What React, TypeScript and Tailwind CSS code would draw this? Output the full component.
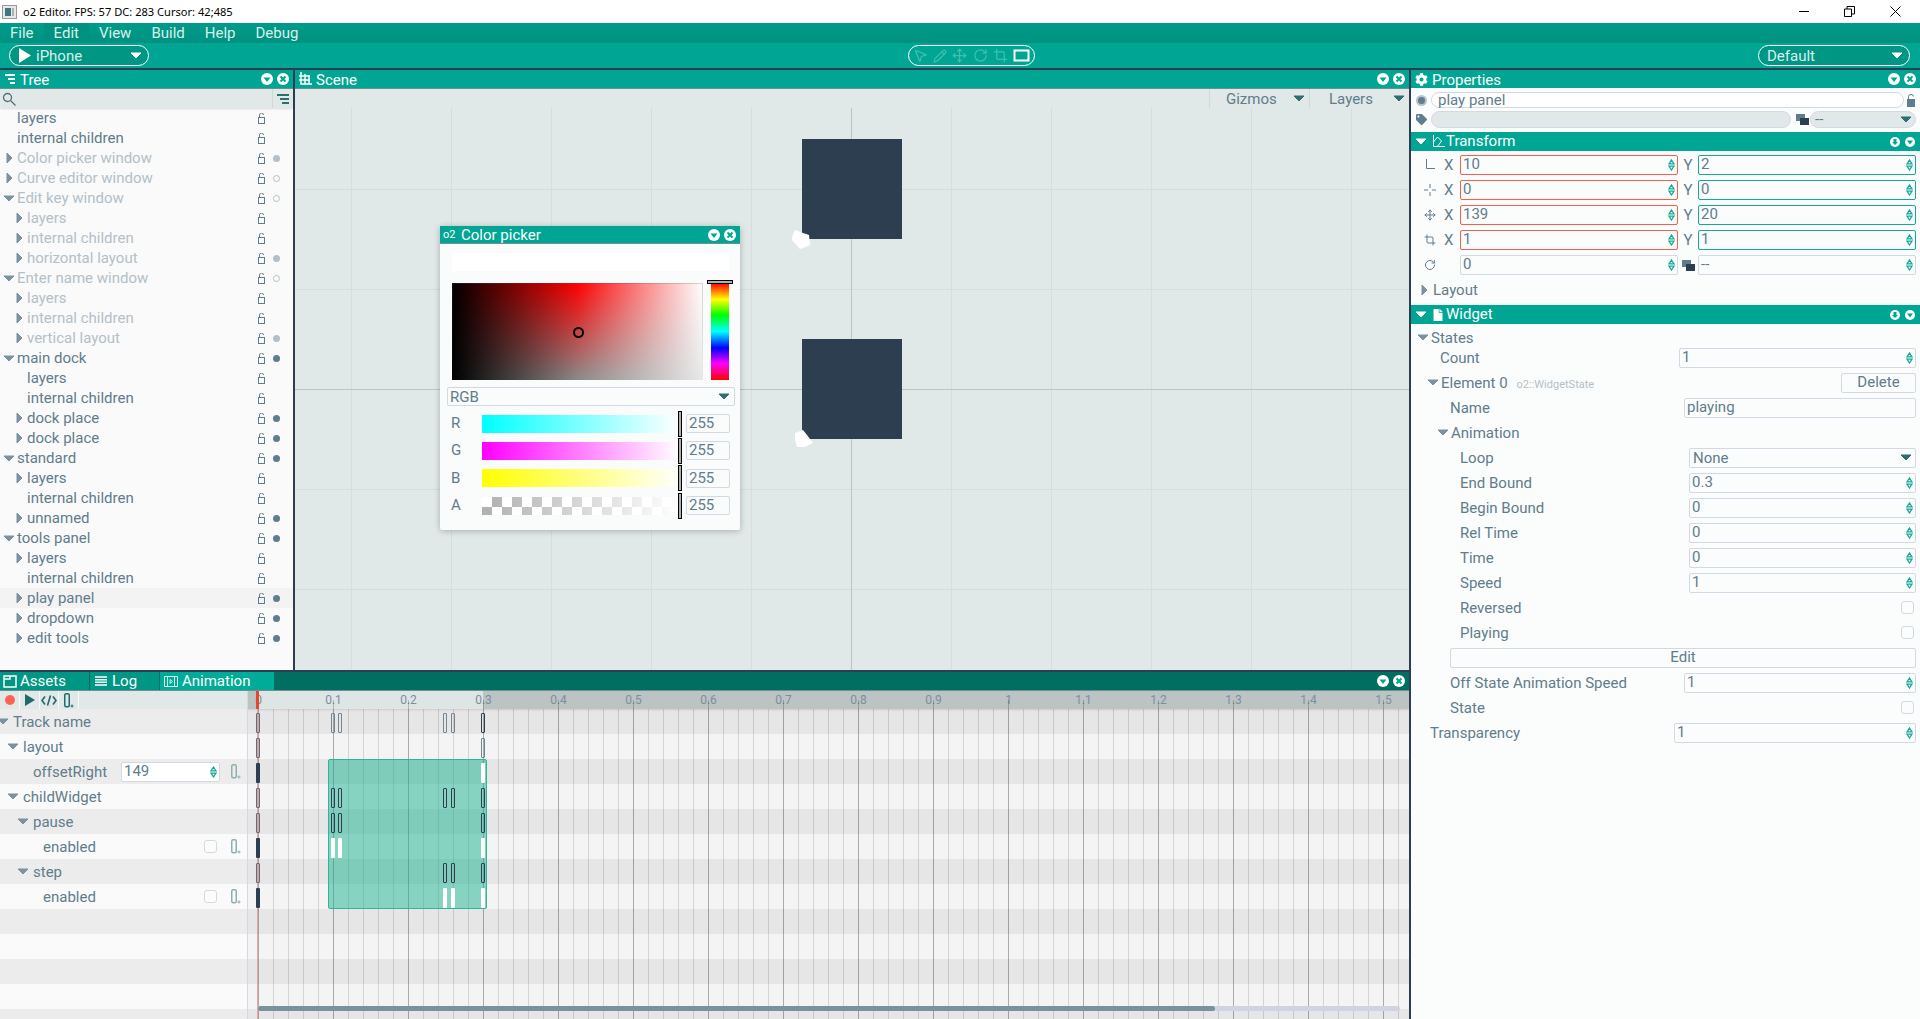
import type { ReactNode } from 'react';
import { MousePointer2, Pencil, Move, RotateCw, Crop } from 'lucide-react';
import { FaCog, FaTag, FaFile } from 'react-icons/fa';

type TreeItem = {
  name: string;
  level: 0 | 1;
  arrow?: 'right' | 'down';
  dim?: boolean;
  dot?: 'fill' | 'ring';
  active?: boolean;
};

const TREE: TreeItem[] = [
  { name: 'layers', level: 0 },
  { name: 'internal children', level: 0 },
  { name: 'Color picker window', level: 0, arrow: 'right', dim: true, dot: 'fill' },
  { name: 'Curve editor window', level: 0, arrow: 'right', dim: true, dot: 'ring' },
  { name: 'Edit key window', level: 0, arrow: 'down', dim: true, dot: 'ring' },
  { name: 'layers', level: 1, arrow: 'right', dim: true },
  { name: 'internal children', level: 1, arrow: 'right', dim: true },
  { name: 'horizontal layout', level: 1, arrow: 'right', dim: true, dot: 'fill' },
  { name: 'Enter name window', level: 0, arrow: 'down', dim: true, dot: 'ring' },
  { name: 'layers', level: 1, arrow: 'right', dim: true },
  { name: 'internal children', level: 1, arrow: 'right', dim: true },
  { name: 'vertical layout', level: 1, arrow: 'right', dim: true, dot: 'fill' },
  { name: 'main dock', level: 0, arrow: 'down', dot: 'fill' },
  { name: 'layers', level: 1 },
  { name: 'internal children', level: 1 },
  { name: 'dock place', level: 1, arrow: 'right', dot: 'fill' },
  { name: 'dock place', level: 1, arrow: 'right', dot: 'fill' },
  { name: 'standard', level: 0, arrow: 'down', dot: 'fill' },
  { name: 'layers', level: 1, arrow: 'right' },
  { name: 'internal children', level: 1 },
  { name: 'unnamed', level: 1, arrow: 'right', dot: 'fill' },
  { name: 'tools panel', level: 0, arrow: 'down', dot: 'fill' },
  { name: 'layers', level: 1, arrow: 'right' },
  { name: 'internal children', level: 1 },
  { name: 'play panel', level: 1, arrow: 'right', dot: 'fill', active: true },
  { name: 'dropdown', level: 1, arrow: 'right', dot: 'fill' },
  { name: 'edit tools', level: 1, arrow: 'right', dot: 'fill' },
];

const RULER = ['0', '0.1', '0.2', '0.3', '0.4', '0.5', '0.6', '0.7', '0.8', '0.9', '1', '1.1', '1.2', '1.3', '1.4', '1.5'];

type KeyKind = 'faint' | 'outline' | 'solid' | 'white' | 'first';

// x is measured from the left edge of the timeline, row is the track index
const KEYS: { x: number; row: number; kind: KeyKind }[] = [
  { x: 8, row: 0, kind: 'first' },
  { x: 83, row: 0, kind: 'faint' },
  { x: 90, row: 0, kind: 'faint' },
  { x: 195, row: 0, kind: 'faint' },
  { x: 203, row: 0, kind: 'faint' },
  { x: 233, row: 0, kind: 'outline' },
  { x: 8, row: 1, kind: 'first' },
  { x: 233, row: 1, kind: 'faint' },
  { x: 8, row: 2, kind: 'solid' },
  { x: 233, row: 2, kind: 'white' },
  { x: 8, row: 3, kind: 'first' },
  { x: 83, row: 3, kind: 'outline' },
  { x: 90, row: 3, kind: 'outline' },
  { x: 195, row: 3, kind: 'outline' },
  { x: 203, row: 3, kind: 'outline' },
  { x: 233, row: 3, kind: 'outline' },
  { x: 8, row: 4, kind: 'first' },
  { x: 83, row: 4, kind: 'outline' },
  { x: 90, row: 4, kind: 'outline' },
  { x: 233, row: 4, kind: 'outline' },
  { x: 8, row: 5, kind: 'solid' },
  { x: 83, row: 5, kind: 'white' },
  { x: 90, row: 5, kind: 'white' },
  { x: 233, row: 5, kind: 'white' },
  { x: 8, row: 6, kind: 'first' },
  { x: 195, row: 6, kind: 'outline' },
  { x: 203, row: 6, kind: 'outline' },
  { x: 233, row: 6, kind: 'outline' },
  { x: 8, row: 7, kind: 'solid' },
  { x: 195, row: 7, kind: 'white' },
  { x: 203, row: 7, kind: 'white' },
  { x: 233, row: 7, kind: 'white' },
];

const KEY_STYLES: Record<KeyKind, string> = {
  faint: 'border border-[#708595]',
  outline: 'border border-[#2c3e50]',
  solid: 'bg-[#2c3e50]',
  white: 'bg-white',
  first: 'border border-[#5c6f80] bg-[#d4a5a0]',
};

function CaretDown({ className = 'text-[#7d929e]' }: { className?: string }) {
  return (
    <svg width="12" height="7" viewBox="0 0 12 7" className={`shrink-0 ${className}`}>
      <path d="M1 1h10L6 6z" fill="currentColor" stroke="currentColor" strokeLinejoin="round" />
    </svg>
  );
}

function CaretRight() {
  return (
    <svg width="7" height="12" viewBox="0 0 7 12" className="shrink-0 text-[#7d929e]">
      <path d="M1 1v10l5-5z" fill="currentColor" stroke="currentColor" strokeLinejoin="round" />
    </svg>
  );
}

function Lock() {
  return (
    <svg width="8" height="11" viewBox="0 0 8 11" className="shrink-0 text-[#5f7d8c]" fill="none" stroke="currentColor">
      <rect x="0.5" y="4.5" width="6" height="6" />
      <path d="M1.500 4V2a2 2 0 0 1 4 0" />
    </svg>
  );
}

function HeaderButtons() {
  return (
    <div className="flex items-center gap-1">
      <svg width="12" height="12" viewBox="0 0 12 12" className="text-white">
        <circle cx="6" cy="6" r="6" fill="currentColor" />
        <path d="M2.500 4.500h7L6 9z" fill="#00a693" />
      </svg>
      <svg width="12" height="12" viewBox="0 0 12 12" className="text-white">
        <circle cx="6" cy="6" r="6" fill="currentColor" />
        <path d="M3.500 3.500l5 5M8.500 3.500l-5 5" stroke="#00a693" strokeWidth="2" />
      </svg>
    </div>
  );
}

function SectionButtons() {
  return (
    <div className="flex items-center gap-[5px]">
      <svg width="10" height="10" viewBox="0 0 10 10">
        <circle cx="5" cy="5" r="5" fill="#fff" />
        <path d="M3.500 2h3v3H8L5 8 2 5h1.500z" fill="#00a693" />
      </svg>
      <svg width="10" height="10" viewBox="0 0 10 10">
        <circle cx="5" cy="5" r="5" fill="#fff" />
        <path d="M2 3.500h6L5 7.500z" fill="#00a693" />
      </svg>
    </div>
  );
}

function Spin() {
  return (
    <svg width="7" height="12" viewBox="0 0 7 12" className="shrink-0 text-[#14a898]" fill="none" stroke="currentColor" strokeWidth="1.300">
      <path d="M3.500 1L6 4.800H1z" />
      <path d="M3.500 11L6 7.200H1z" />
    </svg>
  );
}

const INPUT_BORDER = {
  plain: 'border-[#d3d9e4]',
  red: 'border-[#f4604c]',
  teal: 'border-[#14a898]',
};

function NumberInput({
  value,
  tone = 'plain',
  className = '',
  spin = true,
}: {
  value: string;
  tone?: keyof typeof INPUT_BORDER;
  className?: string;
  spin?: boolean;
}) {
  return (
    <div
      className={`flex h-5 items-center justify-between rounded-[2px] border bg-[#fbfcfc] pl-[2px] pr-[2px] text-[#607d8b] ${INPUT_BORDER[tone]} ${className}`}
    >
      <span className="-mt-px">{value}</span>
      {spin && <Spin />}
    </div>
  );
}

function KeyAdd({ className = 'text-[#8fb0b0]' }: { className?: string }) {
  return (
    <svg width="10" height="15" viewBox="0 0 10 15" className={className}>
      <rect x="0.750" y="0.750" width="4.500" height="13" rx="1.500" fill="none" stroke="currentColor" strokeWidth="1.500" />
      <path d="M6.500 13h3M8 11.500v3" stroke="currentColor" />
    </svg>
  );
}

function Checkbox() {
  return <div className="h-[13px] w-[13px] rounded-[3px] border border-[#d3d9e4] bg-[#fbfcfc]" />;
}

function PropRow({ label, pad, children }: { label: ReactNode; pad: string; children?: ReactNode }) {
  return (
    <div className={`flex h-[25px] shrink-0 items-center justify-between pr-[4px] ${pad}`}>
      <span className="whitespace-nowrap pt-[2px]">{label}</span>
      {children}
    </div>
  );
}

function Expander({ label, pad, extra }: { label: string; pad: string; extra?: ReactNode }) {
  return (
    <div className={`flex items-center gap-[2px] ${pad}`}>
      <CaretDown />
      <span className="pt-[2px]">{label}</span>
      {extra}
    </div>
  );
}

function SectionHeader({ title, icon }: { title: string; icon: ReactNode }) {
  return (
    <div className="flex h-[19px] shrink-0 items-center justify-between bg-[#00a693] pl-[4px] pr-[5px] text-white">
      <div className="flex items-center">
        <CaretDown className="text-white" />
        <div className="ml-[5px] flex w-[12px] justify-center">{icon}</div>
        <span className="ml-[2px]">{title}</span>
      </div>
      <SectionButtons />
    </div>
  );
}

function TransformRow({ icon, x, y, xTone, yTone }: { icon: ReactNode; x: string; y: string; xTone: 'red' | 'plain'; yTone: 'teal' | 'plain' }) {
  const showAxis = xTone === 'red';
  return (
    <div className="flex h-[25px] shrink-0 items-center pl-[9px] pr-[3px]">
      <div className="flex w-[20px] justify-center">{icon}</div>
      <span className="w-[20px] pl-[4px] pt-[2px]">{showAxis ? 'X' : ''}</span>
      <NumberInput value={x} tone={xTone} className="w-[218px]" />
      <div className="flex w-[20px] justify-center pt-[2px]">
        {showAxis ? (
          'Y'
        ) : (
          <svg width="13" height="11" viewBox="0 0 13 11">
            <rect x="0" y="0" width="9" height="7" fill="#5f7d8c" />
            <rect x="4" y="4" width="9" height="7" fill="#2c3e50" />
          </svg>
        )}
      </div>
      <NumberInput value={y} tone={yTone} className="w-[218px]" />
    </div>
  );
}

function Track({ index, children }: { index: number; children?: ReactNode }) {
  return (
    <div className={`flex h-[25px] items-center justify-between pr-[6px] ${index % 2 === 0 ? 'bg-[#ececec]' : 'bg-[#fafafa]'}`}>
      {children}
    </div>
  );
}

function TrackLabel({ index, label, pad }: { index: number; label: string; pad: string }) {
  return (
    <Track index={index}>
      <div className={`flex items-center gap-[4px] ${pad}`}>
        <CaretDown />
        <span className="pt-px">{label}</span>
      </div>
    </Track>
  );
}

function TrackValue({ index, label, pad, children }: { index: number; label: string; pad: string; children: ReactNode }) {
  return (
    <Track index={index}>
      <span className={`pt-px ${pad}`}>{label}</span>
      {children}
    </Track>
  );
}

function ColorPicker() {
  return (
    <div className="absolute left-[145px] top-[118px] h-[304px] w-[300px] rounded-[2px] bg-[#fafbfb] shadow-[0_1px_6px_rgba(0,0,0,0.25)]">
      <div className="flex h-[18px] items-center justify-between border-b border-[#6f8f90] bg-[#00a693] pl-[3px] pr-[4px] text-white">
        <div className="flex items-center">
          <span className="w-[18px] text-[11px] leading-none">o2</span>
          <span className="pt-[2px]">Color picker</span>
        </div>
        <HeaderButtons />
      </div>
      <div className="mx-[12px] mt-[9px] h-[18px] w-[277px] bg-white" />
      <div className="ml-[12px] mt-[12px] flex">
        <div className="relative h-[97px] w-[251px] bg-[linear-gradient(to_right,#000,#f00_50%,#fff)] shadow-[inset_0_0_0_1px_rgba(80,90,110,0.25)]">
          <div className="h-full w-full bg-[linear-gradient(to_right,#000,#8a8a8a_50%,#e8e8e8)] [mask-image:linear-gradient(to_bottom,transparent,black)]" />
          <div className="absolute left-[121px] top-[44px] h-[11px] w-[11px] rounded-full border-2 border-black" />
        </div>
        <div className="relative ml-[8px] h-[97px] w-[18px] bg-[linear-gradient(to_bottom,#f00,#ff0_17%,#0f0_33%,#0ff_50%,#00f_67%,#f0f_83%,#f00)]">
          <div className="absolute -left-[4px] -top-[3px] h-[4px] w-[26px] border border-black bg-[#b0b0b0]" />
        </div>
      </div>
      <div className="mx-[7px] mt-[7px] flex h-[19px] w-[288px] items-center justify-between rounded-[2px] border border-[#d3d9e4] pl-[2px] pr-[4px]">
        <span className="pt-px">RGB</span>
        <CaretDown className="text-[#2f6f6f]" />
      </div>
      <div className="mt-[4px]">
        {[
          { label: 'R', bar: 'bg-[linear-gradient(to_right,#0ff,#fff)]' },
          { label: 'G', bar: 'bg-[linear-gradient(to_right,#f0f,#fff)]' },
          { label: 'B', bar: 'bg-[linear-gradient(to_right,#ff0,#fff)]' },
          {
            label: 'A',
            bar: 'bg-[linear-gradient(to_right,transparent,#fff),conic-gradient(#b0b0b0_25%,#fff_0_50%,#b0b0b0_0_75%,#fff_0)] bg-[size:100%_100%,20px_20px]',
          },
        ].map((c) => (
          <div key={c.label} className="ml-[11px] flex h-[27.300px] items-center">
            <span className="w-[31px]">{c.label}</span>
            <div className={`relative h-[18px] w-[198px] ${c.bar}`}>
              <div className="absolute -right-[2px] -top-[4px] h-[26px] w-[4px] border border-black bg-[#b0b0b0]" />
            </div>
            <div className="ml-[6px] flex h-[19px] w-[44px] items-center rounded-[2px] border border-[#d3d9e4] pl-[2px]">
              <span>255</span>
            </div>
          </div>
        ))}
      </div>
    </div>
  );
}

export default function App() {
  return (
    <div className="flex h-screen flex-col overflow-hidden bg-white font-['Roboto',sans-serif] text-[15px] leading-none text-[#607d8b]">
      {/* window chrome */}
      <div className="flex h-[23px] shrink-0 items-center bg-white pl-[2px] text-black">
        <svg width="15" height="14" viewBox="0 0 15 14" className="mr-[6px]">
          <rect x="0.500" y="0.500" width="14" height="13" fill="#e8e8e8" stroke="#9a9a9a" />
          <rect x="3" y="3" width="6" height="8" fill="#3f7680" />
          <rect x="10" y="3" width="2" height="8" fill="#b0b0b0" />
        </svg>
        <span className="font-['Noto_Sans',sans-serif] text-[11.100px]">o2 Editor. FPS: 57 DC: 283 Cursor: 42;485</span>
        <div className="ml-auto flex items-center">
          <svg width="11" height="11" viewBox="0 0 11 11" className="mr-[34px]">
            <path d="M0 5.500h10" stroke="#000" />
          </svg>
          <svg width="11" height="11" viewBox="0 0 11 11" className="mr-[35px]">
            <path d="M0.500 3h7v7.500h-7zM3 3V0.500h7.500V8H8" fill="none" stroke="#000" />
          </svg>
          <svg width="11" height="11" viewBox="0 0 11 11" className="mr-[19px]">
            <path d="M0.500 0.500l10 10M10.500 0.500l-10 10" stroke="#000" />
          </svg>
        </div>
      </div>

      {/* menu */}
      <div className="flex h-[20px] shrink-0 items-center bg-[linear-gradient(to_bottom,#009c89,#00917f)] text-[#d8f0ec]">
        {['File', 'Edit', 'View', 'Build', 'Help', 'Debug'].map((m) => (
          <div key={m} className={`flex h-full items-center px-[10px] pt-px ${m === 'Edit' ? 'bg-[#00917f]' : ''}`}>
            {m}
          </div>
        ))}
      </div>

      {/* toolbar */}
      <div className="flex h-[25px] shrink-0 items-center bg-[#00a693]">
        <div className="ml-[9px] flex h-[21px] w-[140px] items-center justify-between rounded-full border border-white bg-[#009684] pl-[9px] pr-[6px] text-white">
          <div className="flex items-center gap-[5px]">
            <svg width="12" height="15" viewBox="0 0 12 15">
              <path d="M0 0l12 7.500L0 15z" fill="#fff" />
            </svg>
            <span className="pt-px text-[#d8f0ec]">iPhone</span>
          </div>
          <CaretDown className="text-white" />
        </div>
        <div className="ml-[759px] flex h-[21px] w-[127px] items-center justify-between rounded-full border border-white px-[4px] text-[#3fc0ae]">
          <MousePointer2 size={15} />
          <Pencil size={14} />
          <Move size={15} />
          <RotateCw size={15} />
          <Crop size={15} />
          <svg width="17" height="13" viewBox="0 0 17 13" className="text-white">
            <path d="M1.500 1.500h14v10h-14z" fill="none" stroke="currentColor" strokeWidth="2" />
          </svg>
        </div>
        <div className="ml-auto mr-[10px] flex h-[21px] w-[152px] items-center justify-between rounded-full border border-white bg-[#009684] pl-[8px] pr-[6px]">
          <span className="pt-px text-[#d8f0ec]">Default</span>
          <CaretDown className="text-white" />
        </div>
      </div>
      <div className="h-[2px] shrink-0 bg-[#2c3e50]" />

      <div className="flex min-h-0 flex-1">
        <div className="flex w-[1409px] shrink-0 flex-col">
          <div className="flex h-[600px] shrink-0">
            {/* tree */}
            <div className="flex w-[293px] shrink-0 flex-col bg-[#fafafa]">
              <div className="flex h-[19px] shrink-0 items-center justify-between border-b border-[#6f8f90] bg-[#00a693] pl-[4px] pr-[4px] text-white">
                <div className="flex items-center gap-[4px]">
                  <svg width="12" height="10" viewBox="0 0 12 10" stroke="#fff" strokeWidth="2">
                    <path d="M1 1h10M4 5h7M6 9h5" />
                  </svg>
                  <span className="pt-[2px]">Tree</span>
                </div>
                <HeaderButtons />
              </div>
              <div className="flex h-[19px] shrink-0 items-center justify-between bg-[#e0e8e8] pl-[2px] pr-[4px] shadow-[0_1px_2px_rgba(0,0,0,0.12)]">
                <svg width="14" height="14" viewBox="0 0 14 14" fill="none" stroke="#4f6f7c" strokeWidth="1.300">
                  <circle cx="5.500" cy="5.500" r="4" />
                  <path d="M8.500 8.500l5 5" />
                </svg>
                <div className="flex h-full items-center border-l border-[#d0d8d8] pl-[4px]">
                  <svg width="12" height="10" viewBox="0 0 12 10" stroke="#2f6f6f" strokeWidth="2">
                    <path d="M0 1h12M3 5h9M5 9h7" />
                  </svg>
                </div>
              </div>
              <div className="min-h-0 flex-1">
                {TREE.map((t, i) => (
                  <div key={i} className={`flex h-5 items-center ${t.active ? 'bg-[#f3f3f3]' : ''}`}>
                    <div className={`flex shrink-0 items-center ${t.level === 0 ? 'w-[17px] pl-[3px]' : 'w-[27px] pl-[16px]'}`}>
                      {t.arrow === 'down' && <CaretDown />}
                      {t.arrow === 'right' && (t.level === 0 ? <div className="ml-[3px]"><CaretRight /></div> : <CaretRight />)}
                    </div>
                    <span className={`flex-1 whitespace-nowrap ${t.dim ? 'text-[#b3c0c7]' : ''}`}>{t.name}</span>
                    <Lock />
                    <div className="flex w-[27px] justify-end pr-[13px]">
                      {t.dot === 'fill' && <div className={`h-[7px] w-[7px] rounded-full ${t.dim ? 'bg-[#b3c0c7]' : 'bg-[#5f7d8c]'}`} />}
                      {t.dot === 'ring' && <div className="h-[7px] w-[7px] rounded-full border border-[#b3c0c7]" />}
                    </div>
                  </div>
                ))}
              </div>
            </div>
            <div className="w-[2px] shrink-0 bg-[#2c3e50]" />

            {/* scene */}
            <div className="flex min-w-0 flex-1 flex-col">
              <div className="flex h-[19px] shrink-0 items-center justify-between border-b border-[#6f8f90] bg-[#00a693] pl-[3px] pr-[4px] text-white">
                <div className="flex items-center gap-[4px]">
                  <svg width="14" height="14" viewBox="0 0 14 14" stroke="#fff" strokeWidth="1.500" fill="none">
                    <path d="M3 0v12h11M7 2v10M11 4v8M1 4h11M1 8h11" />
                  </svg>
                  <span className="pt-[2px]">Scene</span>
                </div>
                <HeaderButtons />
              </div>
              <div className="flex h-[19px] shrink-0 justify-end bg-[#e0e8e8] shadow-[0_1px_2px_rgba(0,0,0,0.08)]">
                <div className="flex h-full w-[100px] items-center justify-between border-l border-[#d0d8d8] pl-[16px] pr-[4px]">
                  <span className="pt-[2px]">Gizmos</span>
                  <CaretDown className="text-[#2f6f6f]" />
                </div>
                <div className="flex h-full w-[100px] items-center justify-between border-l border-[#d0d8d8] pl-[19px] pr-[4px]">
                  <span className="pt-[2px]">Layers</span>
                  <CaretDown className="text-[#2f6f6f]" />
                </div>
              </div>
              <div className="relative min-h-0 flex-1 overflow-hidden bg-[#e0e8e8] bg-[linear-gradient(to_right,#d6dddd_1px,transparent_1px),linear-gradient(to_bottom,#d6dddd_1px,transparent_1px)] bg-[size:100px_100px] bg-[position:56px_81px]">
                <div className="absolute inset-y-0 left-[556px] w-px bg-[#bcc4c4]" />
                <div className="absolute inset-x-0 top-[281px] h-px bg-[#bcc4c4]" />
                <div className="absolute left-[507px] top-[31px] h-[100px] w-[100px] bg-[#2d3e50]" />
                <div className="absolute left-[507px] top-[231px] h-[100px] w-[100px] bg-[#2d3e50]" />
                <svg className="absolute left-[495px] top-[122px]" width="22" height="20" viewBox="0 0 22 20">
                  <path d="M2 7L5 0l8 3 6 2 1 10-7 3-3 1-8-9z" fill="#fff" />
                </svg>
                <svg className="absolute left-[500px] top-[322px]" width="20" height="18" viewBox="0 0 20 18">
                  <path d="M0 3l8-3 4 5 6 8-8 4H2l-2-7z" fill="#fff" />
                </svg>
                <ColorPicker />
              </div>
            </div>
          </div>
          <div className="h-[2px] shrink-0 bg-[#2c3e50]" />

          {/* animation panel */}
          <div className="flex min-h-0 flex-1 flex-col">
            <div className="flex h-[19px] shrink-0 items-center justify-between border-b border-[#6f8f90] bg-[#006f62] pr-[4px] text-white">
              <div className="flex h-full">
                <div className="flex w-[90px] items-center gap-[3px] border-r border-[#006f62] bg-[#009684] pl-[3px]">
                  <svg width="14" height="13" viewBox="0 0 14 13" fill="none" stroke="#fff" strokeWidth="1.500">
                    <path d="M1 1h12v11H1zM1 4h6V1" />
                  </svg>
                  <span>Assets</span>
                </div>
                <div className="flex w-[70px] items-center gap-[5px] border-r border-[#006f62] bg-[#009684] pl-[5px]">
                  <svg width="12" height="10" viewBox="0 0 12 10" stroke="#fff" strokeWidth="1.400">
                    <path d="M0 1h12M0 3.700h12M0 6.300h12M0 9h12" />
                  </svg>
                  <span>Log</span>
                </div>
                <div className="flex w-[114px] items-center gap-[4px] bg-[#00ab98] pl-[4px]">
                  <svg width="14" height="11" viewBox="0 0 14 11" fill="none" stroke="#d8f0ec">
                    <path d="M.5.500h13v10H.5zM3.500.500v10M10.500.500v10M6 3.500l2.500 2L6 7.500z" />
                  </svg>
                  <span>Animation</span>
                </div>
              </div>
              <HeaderButtons />
            </div>
            <div className="flex min-h-0 flex-1">
              <div className="flex w-[248px] shrink-0 flex-col overflow-hidden border-r border-[#d3d9e4] bg-[#fafafa]">
                <div className="flex h-[18px] shrink-0 items-center bg-[#e0e8e8] shadow-[0_1px_2px_rgba(0,0,0,0.15)]">
                  <div className="flex h-full w-[20px] items-center justify-center border-r border-[#fafafa]">
                    <div className="h-[10px] w-[10px] rounded-full bg-[#ff6250]" />
                  </div>
                  <div className="flex h-full w-[19px] items-center justify-center">
                    <svg width="10" height="12" viewBox="0 0 10 12">
                      <path d="M0 0l10 6-10 6z" fill="#1f6a6a" />
                    </svg>
                  </div>
                  <div className="flex h-full w-[20px] items-center justify-center border-x border-[#fafafa]">
                    <svg width="16" height="11" viewBox="0 0 16 11" fill="none" stroke="#1f6a6a" strokeWidth="1.600">
                      <path d="M4 1.500L1 5.500l3 4M12 1.500l3 4-3 4M9.500 .500L6.500 10.500" />
                    </svg>
                  </div>
                  <div className="flex h-full w-[20px] items-center justify-center border-r border-[#fafafa]">
                    <KeyAdd className="text-[#1f6a6a]" />
                  </div>
                </div>
                <div>
                  <TrackLabel index={0} label="Track name" pad="-ml-[3px]" />
                  <TrackLabel index={1} label="layout" pad="pl-[7px]" />
                  <TrackValue index={2} label="offsetRight" pad="pl-[33px]">
                    <div className="flex items-center gap-[11px]">
                      <NumberInput value="149" className="w-[99px] border-[#d3d9e4] !bg-white" />
                      <KeyAdd />
                    </div>
                  </TrackValue>
                  <TrackLabel index={3} label="childWidget" pad="pl-[7px]" />
                  <TrackLabel index={4} label="pause" pad="pl-[17px]" />
                  <TrackValue index={5} label="enabled" pad="pl-[43px]">
                    <div className="flex items-center gap-[14px]">
                      <Checkbox />
                      <KeyAdd />
                    </div>
                  </TrackValue>
                  <TrackLabel index={6} label="step" pad="pl-[17px]" />
                  <TrackValue index={7} label="enabled" pad="pl-[43px]">
                    <div className="flex items-center gap-[14px]">
                      <Checkbox />
                      <KeyAdd />
                    </div>
                  </TrackValue>
                  {[8, 9, 10, 11, 12].map((i) => (
                    <Track key={i} index={i} />
                  ))}
                </div>
              </div>

              {/* timeline */}
              <div className="relative min-w-0 flex-1 overflow-hidden bg-[#f4f4f4]">
                <div className="relative z-10 flex h-[18px] items-center overflow-visible bg-[linear-gradient(to_right,#bcc3c3_9px,#dde5e5_9px,#dde5e5_235px,#bcc3c3_235px)] text-[12px] text-[#7a909c] shadow-[0_1px_2px_rgba(0,0,0,0.12)]">
                  <div className="-ml-[27px] flex">
                    {RULER.map((r) => (
                      <span key={r} className="w-[75px] shrink-0 text-center">
                        {r}
                      </span>
                    ))}
                  </div>
                </div>
                <div>
                  {[0, 1, 2, 3, 4, 5, 6, 7, 8, 9, 10, 11, 12].map((i) => (
                    <div key={i} className={`h-[25px] ${i % 2 === 0 ? 'bg-[#e6e6e6]' : 'bg-[#f4f4f4]'}`} />
                  ))}
                </div>
                <div className="absolute inset-x-0 bottom-0 top-[14px] bg-[linear-gradient(to_right,rgba(0,0,0,0.13)_1px,transparent_1px)] bg-[size:15px_100%] bg-[position:10px_0]" />
                <div className="absolute inset-x-0 bottom-0 top-[9px] z-10 bg-[linear-gradient(to_right,rgba(0,0,0,0.2)_1px,transparent_1px)] bg-[size:75px_100%] bg-[position:10px_0]" />
                <div className="absolute bottom-0 left-[9px] top-0 z-10 w-px bg-[#e0a89f]" />
                <div className="absolute left-[8px] top-0 z-10 h-[18px] w-[3px] bg-[#e8452f]" />
                <div className="absolute left-[80px] top-[68px] z-10 h-[150px] w-[159px] rounded-[2px] border border-[#2fb59c] bg-[rgba(26,178,142,0.5)]" />
                {KEYS.map((k, i) => (
                  <div
                    key={i}
                    className={`absolute z-20 h-[20px] w-[4px] rounded-[1px] ${KEY_STYLES[k.kind]}`}
                    style={{ left: k.x, top: 22 + k.row * 25 }}
                  />
                ))}
                <div className="absolute bottom-[8px] left-[10px] z-20 flex h-[5px] w-[1142px] rounded-full bg-[#cfd4e0]">
                  <div className="h-full w-[957px] rounded-full bg-[#7a929c]" />
                </div>
              </div>
            </div>
          </div>
        </div>
        <div className="w-[2px] shrink-0 bg-[#2c3e50]" />

        {/* properties */}
        <div className="flex min-w-0 flex-1 flex-col bg-[#fbfcfc]">
          <div className="flex h-[18px] shrink-0 items-center justify-between bg-[#00a693] pl-[4px] pr-[4px] text-white">
            <div className="flex items-center gap-[4px]">
              <FaCog size={13} />
              <span className="pt-[2px]">Properties</span>
            </div>
            <HeaderButtons />
          </div>
          <div className="mt-[4px] flex h-[16px] shrink-0 items-center pl-[5px] pr-[3px]">
            <div className="mr-[4px] flex h-[11px] w-[11px] items-center justify-center rounded-full bg-[#b7c4ca]">
              <div className="h-[7px] w-[7px] rounded-full bg-[#5f7d8c]" />
            </div>
            <div className="flex h-full w-[473px] items-center rounded-full border border-[#d3d9e4] bg-white pl-[6px]">play panel</div>
            <svg width="9" height="13" viewBox="0 0 9 13" className="ml-[3px] text-[#5f7d8c]">
              <rect x="0" y="5" width="8" height="8" fill="currentColor" />
              <path d="M1.500 5V2.500a2.500 2 0 0 1 5 0" fill="none" stroke="currentColor" />
            </svg>
          </div>
          <div className="mt-[3px] flex h-[17px] shrink-0 items-center pl-[5px]">
            <FaTag size={11} className="mr-[4px] text-[#5f7d8c]" />
            <div className="h-full w-[360px] rounded-full border border-[#d3d9e4] bg-[#e0e8e8]" />
            <svg width="13" height="11" viewBox="0 0 13 11" className="ml-[5px]">
              <rect x="0" y="0" width="9" height="7" fill="#5f7d8c" />
              <rect x="4" y="4" width="9" height="7" fill="#2c3e50" />
            </svg>
            <div className="ml-[1px] flex h-full w-[106px] items-center justify-between rounded-full border border-[#d3d9e4] bg-[#e0e8e8] pl-[4px] pr-[3px]">
              <span>--</span>
              <CaretDown className="text-[#2f6f6f]" />
            </div>
          </div>
          <div className="mt-[4px]">
            <SectionHeader
              title="Transform"
              icon={
                <svg width="13" height="13" viewBox="0 0 13 13" fill="none" stroke="#fff" className="shrink-0">
                  <path d="M1.500 0v11.500H13M1.500 7l4-5 4 4-4 5.500" />
                </svg>
              }
            />
          </div>
          <div className="pt-px">
            <TransformRow
              icon={
                <svg width="12" height="12" viewBox="0 0 12 12" fill="none" stroke="#5f7d8c">
                  <path d="M2.500 0v9.500H11" />
                </svg>
              }
              x="10"
              y="2"
              xTone="red"
              yTone="teal"
            />
            <TransformRow
              icon={
                <svg width="12" height="12" viewBox="0 0 12 12" stroke="#5f7d8c">
                  <path d="M6 0v4M6 8v4M0 6h4M8 6h4" />
                </svg>
              }
              x="0"
              y="0"
              xTone="red"
              yTone="teal"
            />
            <TransformRow icon={<Move size={12} className="text-[#5f7d8c]" />} x="139" y="20" xTone="red" yTone="teal" />
            <TransformRow icon={<Crop size={12} className="text-[#5f7d8c]" />} x="1" y="1" xTone="red" yTone="teal" />
            <TransformRow icon={<RotateCw size={12} className="text-[#5f7d8c]" />} x="0" y="--" xTone="plain" yTone="plain" />
            <div className="flex h-[25px] items-center gap-[5px] pl-[10px]">
              <CaretRight />
              <span className="pt-[2px]">Layout</span>
            </div>
          </div>
          <div className="mt-[3px] shadow-[0_-1px_2px_rgba(0,0,0,0.08)]">
            <SectionHeader title="Widget" icon={<FaFile size={12} className="text-white" />} />
          </div>
          <div className="pt-px">
            <div className="flex h-[20px] items-center pt-[5px]">
              <Expander label="States" pad="pl-[6px]" />
            </div>
            <PropRow label="Count" pad="pl-[29px]">
              <NumberInput value="1" className="w-[237px]" />
            </PropRow>
            <div className="flex h-[25px] items-center justify-between pr-[4px]">
              <Expander
                label="Element 0"
                pad="pl-[16px]"
                extra={<span className="ml-[7px] pt-[3px] text-[11px] text-[#b3c0c7]">o2::WidgetState</span>}
              />
              <div className="flex h-5 w-[75px] items-center justify-center rounded-[2px] border border-[#d3d9e4]">Delete</div>
            </div>
            <PropRow label="Name" pad="pl-[39px]">
              <NumberInput value="playing" spin={false} className="w-[232px]" />
            </PropRow>
            <div className="flex h-[25px] items-center">
              <Expander label="Animation" pad="pl-[26px]" />
            </div>
            <PropRow label="Loop" pad="pl-[49px]">
              <div className="flex h-5 w-[227px] items-center justify-between rounded-[2px] border border-[#d3d9e4] pl-[3px] pr-[3px]">
                <span className="pt-px">None</span>
                <CaretDown className="text-[#2f6f6f]" />
              </div>
            </PropRow>
            <PropRow label="End Bound" pad="pl-[49px]">
              <NumberInput value="0.3" className="w-[227px]" />
            </PropRow>
            <PropRow label="Begin Bound" pad="pl-[49px]">
              <NumberInput value="0" className="w-[227px]" />
            </PropRow>
            <PropRow label="Rel Time" pad="pl-[49px]">
              <NumberInput value="0" className="w-[227px]" />
            </PropRow>
            <PropRow label="Time" pad="pl-[49px]">
              <NumberInput value="0" className="w-[227px]" />
            </PropRow>
            <PropRow label="Speed" pad="pl-[49px]">
              <NumberInput value="1" className="w-[227px]" />
            </PropRow>
            <PropRow label="Reversed" pad="pl-[49px]">
              <div className="mr-[2px]">
                <Checkbox />
              </div>
            </PropRow>
            <PropRow label="Playing" pad="pl-[49px]">
              <div className="mr-[2px]">
                <Checkbox />
              </div>
            </PropRow>
            <div className="flex h-[25px] items-center pl-[39px] pr-[4px]">
              <div className="flex h-5 w-full items-center justify-center rounded-[2px] border border-[#d3d9e4]">Edit</div>
            </div>
            <PropRow label="Off State Animation Speed" pad="pl-[39px]">
              <NumberInput value="1" className="w-[232px]" />
            </PropRow>
            <PropRow label="State" pad="pl-[39px]">
              <div className="mr-[2px]">
                <Checkbox />
              </div>
            </PropRow>
            <PropRow label="Transparency" pad="pl-[19px]">
              <NumberInput value="1" className="w-[242px]" />
            </PropRow>
          </div>
        </div>
      </div>
    </div>
  );
}
